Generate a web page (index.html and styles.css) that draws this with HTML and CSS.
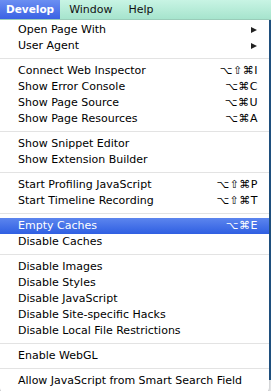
FILE: index.html
```html
<!DOCTYPE html>
<html lang="en">
	<head>
		<meta charset="UTF-8" />
		<meta name="viewport" content="width=device-width, initial-scale=1.0" />
		<title>Develop Menu</title>
		<link rel="stylesheet" href="styles.css">
	</head>
	<body>
		<div class="menubar">
			<span class="menu-title active">Develop</span>
			<span class="menu-title">Window</span>
			<span class="menu-title">Help</span>
		</div>

		<div class="dropdown-area">
			<div class="menu">
				<div class="item"><span>Open Page With</span><span class="arrow"></span></div>
				<div class="item"><span>User Agent</span><span class="arrow"></span></div>
				<div class="separator"></div>
				<div class="item"><span>Connect Web Inspector</span><span class="key">⌥⇧⌘I</span></div>
				<div class="item"><span>Show Error Console</span><span class="key">⌥⌘C</span></div>
				<div class="item"><span>Show Page Source</span><span class="key">⌥⌘U</span></div>
				<div class="item"><span>Show Page Resources</span><span class="key">⌥⌘A</span></div>
				<div class="separator"></div>
				<div class="item"><span>Show Snippet Editor</span></div>
				<div class="item"><span>Show Extension Builder</span></div>
				<div class="separator"></div>
				<div class="item"><span>Start Profiling JavaScript</span><span class="key">⌥⇧⌘P</span></div>
				<div class="item"><span>Start Timeline Recording</span><span class="key">⌥⇧⌘T</span></div>
				<div class="separator"></div>
				<div class="item selected"><span>Empty Caches</span><span class="key">⌥⌘E</span></div>
				<div class="item"><span>Disable Caches</span></div>
				<div class="separator"></div>
				<div class="item"><span>Disable Images</span></div>
				<div class="item"><span>Disable Styles</span></div>
				<div class="item"><span>Disable JavaScript</span></div>
				<div class="item"><span>Disable Site-specific Hacks</span></div>
				<div class="item"><span>Disable Local File Restrictions</span></div>
				<div class="separator"></div>
				<div class="item"><span>Enable WebGL</span></div>
				<div class="separator"></div>
				<div class="item"><span>Allow JavaScript from Smart Search Field</span></div>
			</div>
			<div class="window-edge"></div>
		</div>
	</body>
</html>
```

FILE: styles.css
```css
body {
	margin: 0;
	font-family: "DejaVu Sans", Verdana, sans-serif;
	font-size: 11px;
	color: #000;
	background: #e4e6e8;
	width: 271px;
	height: 391px;
	overflow: hidden;
}

.menubar {
	display: flex;
	height: 20px;
	background: linear-gradient(#c8f4e4, #a6e4cd);
	border-bottom: 1px solid #9ccfbc;
	box-sizing: border-box;
}

.menu-title {
	line-height: 19px;
	padding: 0 8px;
	color: #111;
}

.menu-title.active {
	padding: 0 6px;
	font-weight: bold;
	font-size: 10.5px;
	color: #fff;
	background: linear-gradient(#6b8ff2, #3a62e4);
}

.menu-title.active + .menu-title {
	padding-left: 9px;
}

.dropdown-area {
	display: flex;
	align-items: flex-start;
}

.menu {
	width: 269px;
	background: #fff;
	padding: 2px 0 4px;
	border-radius: 0 0 5px 5px;
	box-shadow: 0 1px 2px rgba(0,0,0,0.25);
}

.window-edge {
	width: 2px;
	height: 360px;
	background: #1f4f7d;
}

.item {
	display: flex;
	justify-content: space-between;
	align-items: center;
	height: 16px;
	line-height: 16px;
	padding: 0 11px 0 18px;
	white-space: nowrap;
}

.item.selected {
	color: #fff;
	background: linear-gradient(#5c85ee, #2f5fe2);
}

.key {
	letter-spacing: 0.5px;
}

.arrow {
	width: 0;
	height: 0;
	border-top: 3.5px solid transparent;
	border-bottom: 3.5px solid transparent;
	border-left: 6px solid #222;
	margin-right: 1px;
}

.separator {
	height: 1px;
	margin: 4px 0;
	background: #e3e3e3;
}
```
